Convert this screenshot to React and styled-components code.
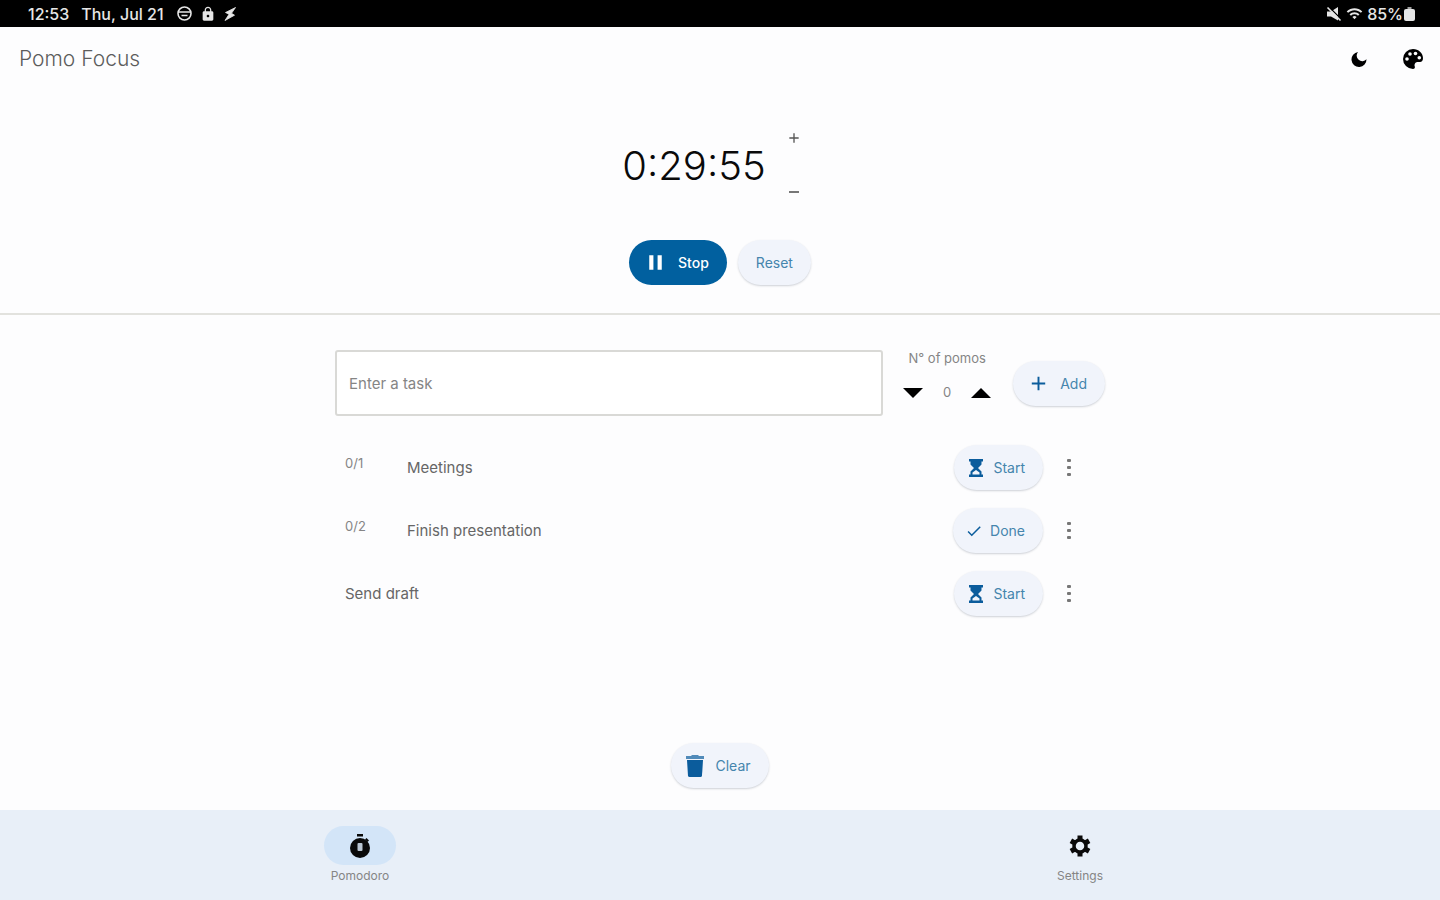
import React, { useState } from 'react';
import styled, { createGlobalStyle } from 'styled-components';
import { MdAdd, MdCheck, MdLock, MdPause, MdWifi } from 'react-icons/md';

const GlobalStyle = createGlobalStyle`
  * {
    box-sizing: border-box;
  }

  body {
    margin: 0;
    background: #fdfdfe;
    color: #6a6a6a;
    font-family: Inter, 'Liberation Sans', sans-serif;
    font-size: 15px;
  }

  button,
  input {
    font: inherit;
  }
`;

const Page = styled.div`
  display: flex;
  flex-direction: column;
  min-height: 100vh;
`;

const StatusBar = styled.div`
  display: flex;
  justify-content: space-between;
  align-items: center;
  height: 27px;
  padding: 0 24px 0 28px;
  background: #000;
  color: #e6e6e6;
  font-size: 16px;
  font-weight: 500;
`;

const StatusGroup = styled.div`
  display: flex;
  align-items: center;
  gap: ${props => props.$gap}px;
`;

const Header = styled.header`
  display: flex;
  justify-content: space-between;
  align-items: center;
  height: 63px;
  padding: 0 15px 0 19px;
`;

const Title = styled.h1`
  margin: 0;
  color: #5c5c5c;
  font-size: 21px;
  font-weight: 300;
`;

const Actions = styled.div`
  display: flex;
  gap: 34px;
`;

const IconButton = styled.button`
  display: flex;
  align-items: center;
  justify-content: center;
  padding: 0;
  border: 0;
  background: none;
  color: ${props => props.$color || '#000'};
  cursor: pointer;
`;

const Timer = styled.section`
  display: flex;
  flex-direction: column;
  align-items: center;
  height: 225px;
  padding-top: 24px;
  border-bottom: 2px solid #e2e2de;
`;

const Clock = styled.div`
  display: flex;
  align-items: center;
  gap: 4px;
`;

const Time = styled.div`
  color: #0a0a0a;
  font-size: 40px;
  font-weight: 300;
`;

const Steps = styled.div`
  display: flex;
  flex-direction: column;
  gap: 6px;

  & > button {
    width: 48px;
    height: 48px;
  }
`;

const ButtonRow = styled.div`
  display: flex;
  align-items: center;
  gap: 11px;
  margin-top: 24px;
`;

const Pill = styled.button`
  display: flex;
  align-items: center;
  justify-content: center;
  gap: ${props => (props.$compact ? 7 : 10)}px;
  height: 45px;
  padding: 0 18px;
  border: 0;
  border-radius: 23px;
  background: ${props => (props.$primary ? '#01609f' : '#f1f4fb')};
  box-shadow: ${props => (props.$primary ? 'none' : '0 1px 2px rgba(60, 70, 90, 0.24)')};
  color: ${props => (props.$primary ? '#fff' : '#4585ad')};
  font-size: 14px;
  font-weight: ${props => (props.$primary ? 500 : 400)};
  white-space: nowrap;
  cursor: pointer;

  & > svg {
    flex: none;
    margin-left: ${props => (props.$compact ? -6 : -4)}px;
    color: ${props => (props.$primary ? '#fff' : '#0b5c9c')};
  }
`;

const Main = styled.main`
  display: flex;
  flex: 1;
  flex-direction: column;
  width: 100%;
  max-width: 770px;
  margin: 0 auto;
  padding: 35px 0 22px;
`;

const TaskForm = styled.form`
  display: flex;
  align-items: center;
`;

const TaskInput = styled.input`
  flex: 1;
  min-width: 0;
  height: 66px;
  padding: 0 12px;
  border: 2px solid #d9d9d6;
  border-radius: 3px;
  background: #fff;
  color: #5c5c5c;

  &::placeholder {
    color: #858585;
    opacity: 1;
  }
`;

const Pomos = styled.div`
  display: flex;
  flex-direction: column;
  align-items: center;
  gap: 17px;
  width: 88px;
  margin: 0 22px 0 20px;
  padding-bottom: 15px;
  color: #858585;
  font-size: 13px;
  line-height: 17px;
`;

const Counter = styled.div`
  display: flex;
  justify-content: space-between;
  align-items: center;
  width: 100%;
`;

const TaskList = styled.ul`
  margin: 20px 0 0;
  padding: 0;
  list-style: none;
`;

const Task = styled.li`
  display: flex;
  align-items: center;
  height: 63px;
  padding: 0 26px 0 10px;
`;

const Progress = styled.span`
  width: 62px;
  padding-bottom: 10px;
  color: #858585;
  font-size: 13px;
`;

const TaskName = styled.span`
  flex: 1;
  color: #666;
`;

const MenuButton = styled(IconButton)`
  width: 20px;
  height: 40px;
  margin-left: 16px;
`;

const ClearRow = styled.div`
  display: flex;
  justify-content: center;
  margin-top: auto;
`;

const TabBar = styled.nav`
  display: flex;
  height: 90px;
  background: #e8eff8;
`;

const Tab = styled.a`
  display: flex;
  flex: 1;
  flex-direction: column;
  align-items: center;
  gap: 3px;
  padding-top: 16px;
  color: #858585;
  font-size: 12px;
  line-height: 16px;
  text-decoration: none;
`;

const TabIcon = styled.span`
  display: flex;
  align-items: center;
  justify-content: center;
  width: 72px;
  height: 39px;
  border-radius: 20px;
  background: ${props => (props.$active ? '#d3e5f8' : 'transparent')};
  color: #0a0a0a;
`;

const DndIcon = () => (
  <svg width="17" height="17" viewBox="0 0 17 17" fill="none" stroke="currentColor" strokeWidth="1.6">
    <circle cx="8.5" cy="8.5" r="6.5" />
    <path d="M2.5 7h12M5.5 10.5h6" />
  </svg>
);

const BoltIcon = () => (
  <svg width="14" height="16" viewBox="0 0 14 16" fill="currentColor">
    <path d="M12.5 1.500 2.500 6.500 6 8.300 2 14.500 11.500 9.200 8.500 7.300z" stroke="currentColor" strokeWidth="0.8" />
  </svg>
);

const MuteIcon = () => (
  <svg width="16" height="16" viewBox="0 0 16 16" fill="currentColor">
    <path d="M1 5.500h4L12 1v13.500L5 10.500H1z" />
    <path d="M3 1l12 12" stroke="#000" strokeWidth="1.2" />
    <path d="M1.500 1.500 14.500 14.500" stroke="currentColor" strokeWidth="1.6" />
  </svg>
);

const BatteryIcon = () => (
  <svg width="13" height="14" viewBox="0 0 13 14" fill="currentColor">
    <path d="M4.500 0h4v2h-4z" opacity="0.7" />
    <rect x="1" y="2" width="11" height="12" rx="2" />
  </svg>
);

const MoonIcon = () => (
  <svg width="16" height="16" viewBox="0 0 16 16" fill="currentColor">
    <path d="M7 1a5.5 5.5 0 0 0 8.5 7.2A7.5 7.5 0 1 1 7 1z" />
  </svg>
);

const PaletteIcon = () => (
  <svg width="24" height="24" viewBox="0 0 24 24" fill="currentColor">
    <path d="M12 2a10 10 0 0 0 0 20c1.500 0 2.200-1.200 1.800-2.400-.8-2.300.4-4.600 3-4.600H19c1.800 0 3-1.500 3-4 0-5-4.500-9-10-9z" />
    <g fill="#fdfdfe">
      <circle cx="6" cy="12" r="1.8" />
      <circle cx="9" cy="7" r="1.8" />
      <circle cx="14.500" cy="6.500" r="1.8" />
      <circle cx="18.300" cy="10.800" r="1.8" />
    </g>
  </svg>
);

const StopwatchIcon = () => (
  <svg width="24" height="26" viewBox="0 0 24 26" fill="currentColor">
    <path d="M9 1h6v2.5H9z" />
    <path d="M12 5a10 10 0 1 0 0 20 10 10 0 0 0 0-20z" />
    <path d="m18.5 5 2.500 2.500-1.500 1.500L17 6.500z" />
    <rect x="9.500" y="10" width="5" height="8" rx="1" fill="#b9c5d2" />
  </svg>
);

const GearIcon = () => (
  <svg width="24" height="24" viewBox="0 0 24 24" fill="none" stroke="currentColor">
    <circle cx="12" cy="12" r="6" strokeWidth="3.500" />
    <path
      d="M12 1.500V6M12 18v4.500M2.900 6.800l3.900 2.200M17.200 15l3.900 2.200M2.900 17.200 6.800 15M17.200 9l3.900-2.200"
      strokeWidth="5"
    />
  </svg>
);

const HourglassIcon = () => (
  <svg width="20" height="20" viewBox="0 0 20 20" fill="currentColor">
    <path d="M3 1h14v2.500h-1.500V6.500L12 10l3.500 3.500v3H17V19H3v-2.500h1.500v-3L8 10 4.500 6.500v-3H3z" />
    <path d="M6.500 16.500v-2L10 12l3.500 2.500v2z" fill="#f1f4fb" />
  </svg>
);

const DotsIcon = () => (
  <svg width="6" height="20" viewBox="0 0 6 20" fill="#777">
    <rect x="1" y="1" width="4" height="3" rx="1" />
    <rect x="1" y="8" width="4" height="3" rx="1" />
    <rect x="1" y="15" width="4" height="3" rx="1" />
  </svg>
);

const TrashIcon = () => (
  <svg width="20" height="24" viewBox="0 0 20 24" fill="currentColor">
    <path d="M1 2h5l1-1h6l1 1h5v3H1z" opacity="0.7" />
    <path d="M2 6h16l-1 15.5Q16.900 23 15.500 23h-11Q3.100 23 3 21.500z" />
  </svg>
);

const Triangle = ({ up }) => (
  <svg width="20" height="12" viewBox="0 0 20 12" fill="#000">
    <path d={up ? 'M0 11 10 1l10 10z' : 'M0 1h20L10 11z'} />
  </svg>
);

const tasks = [
  { name: 'Meetings', progress: '0/1' },
  { name: 'Finish presentation', progress: '0/2', done: true },
  { name: 'Send draft' },
];

export default function App() {
  const [text, setText] = useState('');
  const [pomos, setPomos] = useState(0);

  return (
    <Page>
      <GlobalStyle />
      <StatusBar>
        <StatusGroup $gap={12}>
          <span>12:53</span>
          <span>Thu, Jul 21</span>
          <StatusGroup $gap={7}>
            <DndIcon />
            <MdLock size={16} />
            <BoltIcon />
          </StatusGroup>
        </StatusGroup>
        <StatusGroup $gap={4}>
          <MuteIcon />
          <MdWifi size={17} />
          <StatusGroup $gap={0}>
            <span>85%</span>
            <BatteryIcon />
          </StatusGroup>
        </StatusGroup>
      </StatusBar>

      <Header>
        <Title>Pomo Focus</Title>
        <Actions>
          <IconButton aria-label="Dark mode"><MoonIcon /></IconButton>
          <IconButton aria-label="Theme"><PaletteIcon /></IconButton>
        </Actions>
      </Header>

      <Timer>
        <Clock>
          <Time>0:29:55</Time>
          <Steps>
            <IconButton aria-label="More time" $color="#555"><MdAdd size={16} /></IconButton>
            <IconButton aria-label="Less time" $color="#777">
              <svg width="12" height="4" viewBox="0 0 12 4" fill="currentColor"><path d="M1 1h10v2H1z" /></svg>
            </IconButton>
          </Steps>
        </Clock>
        <ButtonRow>
          <Pill $primary><MdPause size={25} />Stop</Pill>
          <Pill>Reset</Pill>
        </ButtonRow>
      </Timer>

      <Main>
        <TaskForm onSubmit={e => e.preventDefault()}>
          <TaskInput
            aria-label="Enter a task"
            placeholder="Enter a task"
            value={text}
            onChange={e => setText(e.target.value)}
          />
          <Pomos>
            <span>N° of pomos</span>
            <Counter>
              <IconButton type="button" aria-label="Fewer pomos" onClick={() => setPomos(Math.max(0, pomos - 1))}>
                <Triangle />
              </IconButton>
              <span>{pomos}</span>
              <IconButton type="button" aria-label="More pomos" onClick={() => setPomos(pomos + 1)}>
                <Triangle up />
              </IconButton>
            </Counter>
          </Pomos>
          <Pill><MdAdd size={23} />Add</Pill>
        </TaskForm>

        <TaskList>
          {tasks.map(task => (
            <Task key={task.name}>
              {task.progress && <Progress>{task.progress}</Progress>}
              <TaskName>{task.name}</TaskName>
              <Pill $compact>
                {task.done ? <MdCheck size={18} /> : <HourglassIcon />}
                {task.done ? 'Done' : 'Start'}
              </Pill>
              <MenuButton aria-label="Task menu"><DotsIcon /></MenuButton>
            </Task>
          ))}
        </TaskList>

        <ClearRow>
          <Pill><TrashIcon />Clear</Pill>
        </ClearRow>
      </Main>

      <TabBar>
        <Tab href="#pomodoro">
          <TabIcon $active><StopwatchIcon /></TabIcon>
          Pomodoro
        </Tab>
        <Tab href="#settings">
          <TabIcon><GearIcon /></TabIcon>
          Settings
        </Tab>
      </TabBar>
    </Page>
  );
}
